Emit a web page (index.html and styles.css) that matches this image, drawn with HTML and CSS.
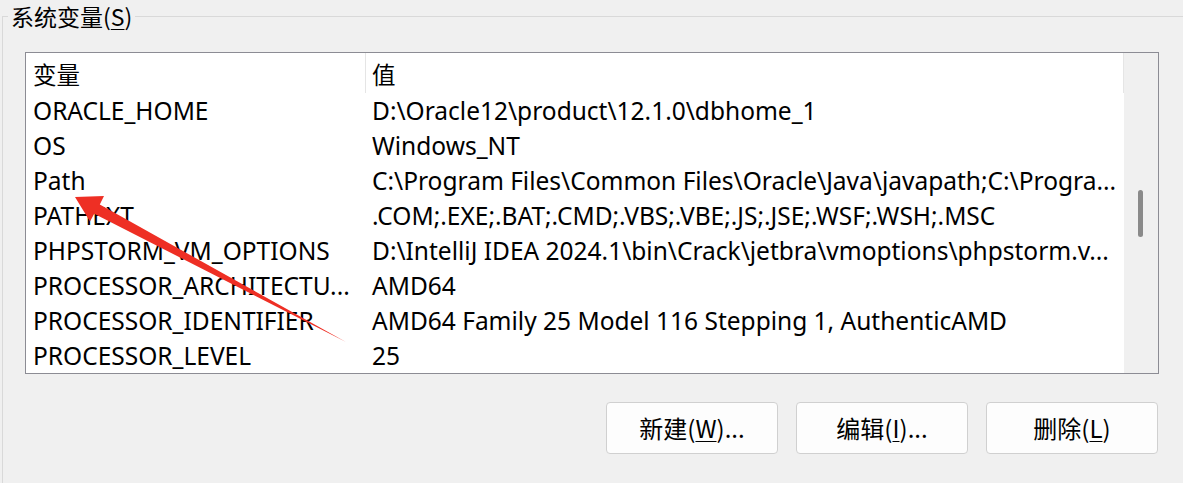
FILE: index.html
```html
<!DOCTYPE html>
<html lang="zh-CN">
<head>
<meta charset="utf-8">
<title>系统变量</title>
<link rel="stylesheet" href="styles.css">
</head>
<body>
<div class="group">
  <div class="group-title">系统变量(<u>S</u>)</div>
  <div class="list">
    <div class="list-main">
      <div class="row header"><div class="c1">变量</div><div class="c2">值</div></div>
      <div class="row"><div class="c1">ORACLE_HOME</div><div class="c2">D:\Oracle12\product\12.1.0\dbhome_1</div></div>
      <div class="row"><div class="c1">OS</div><div class="c2">Windows_NT</div></div>
      <div class="row"><div class="c1">Path</div><div class="c2">C:\Program Files\Common Files\Oracle\Java\javapath;C:\Progra...</div></div>
      <div class="row"><div class="c1">PATHEXT</div><div class="c2">.COM;.EXE;.BAT;.CMD;.VBS;.VBE;.JS;.JSE;.WSF;.WSH;.MSC</div></div>
      <div class="row"><div class="c1">PHPSTORM_VM_OPTIONS</div><div class="c2">D:\IntelliJ IDEA 2024.1\bin\Crack\jetbra\vmoptions\phpstorm.v...</div></div>
      <div class="row"><div class="c1">PROCESSOR_ARCHITECTU...</div><div class="c2">AMD64</div></div>
      <div class="row"><div class="c1">PROCESSOR_IDENTIFIER</div><div class="c2">AMD64 Family 25 Model 116 Stepping 1, AuthenticAMD</div></div>
      <div class="row"><div class="c1">PROCESSOR_LEVEL</div><div class="c2">25</div></div>
    </div>
    <div class="scrollbar"><div class="thumb"></div></div>
  </div>
  <div class="buttons">
    <div class="btn">新建(<u>W</u>)...</div>
    <div class="btn">编辑(<u>I</u>)...</div>
    <div class="btn">删除(<u>L</u>)</div>
  </div>
</div>
<svg class="arrow" width="1183" height="483" viewBox="0 0 1183 483">
  <polygon points="75,197 104,196 99.8,204.6 346,342 94.2,213.8 90,221.5" fill="#ee2f24"/>
</svg>
</body>
</html>
```
FILE: styles.css
```css
html, body {
  margin: 0;
  padding: 0;
  background: #f0f0f0;
  overflow: hidden;
}
body {
  width: 1183px;
  height: 483px;
  font-family: "Noto Sans", "Noto Sans CJK SC", sans-serif;
  font-size: 24.5px;
  color: #000;
  position: relative;
}
.group {
  margin: 16px 0 0 2px;
  box-sizing: border-box;
  width: 1181px;
  height: 480px;
  border-top: 1px solid #d9d9d9;
  border-left: 1px solid #d9d9d9;
}
.group-title {
  display: block;
  width: max-content;
  margin: -16px 0 0 5px;
  padding: 0 3px;
  height: 30px;
  line-height: 30px;
  background: #f0f0f0;
  font-family: "Noto Sans CJK SC", "Noto Sans", sans-serif;
  font-size: 23px;
}
.group-title u, .btn u {
  text-underline-offset: 3px;
  text-decoration-thickness: 1px;
}
.list {
  display: flex;
  margin: 21px 0 0 22px;
  width: 1134px;
  height: 322px;
  box-sizing: border-box;
  border: 1px solid #8c8c94;
  background: #fff;
}
.list-main {
  width: 1098px;
  display: flex;
  flex-direction: column;
}
.row {
  display: flex;
  height: 35px;
  flex: none;
  align-items: center;
  white-space: nowrap;
}
.row .c1 {
  width: 340px;
  box-sizing: border-box;
  padding-left: 7px;
  overflow: hidden;
}
.row .c2 {
  flex: 1;
  box-sizing: border-box;
  padding-left: 6px;
  overflow: hidden;
}
.header {
  height: 40px;
  align-items: stretch;
  font-family: "Noto Sans CJK SC", "Noto Sans", sans-serif;
  font-size: 23.5px;
}
.header .c1, .header .c2 {
  display: flex;
  align-items: center;
  padding-top: 2px;
}
.header .c1 {
  border-right: 1px solid #e5e5e5;
}
.header .c2 {
  border-right: 1px solid #e5e5e5;
  padding-left: 6px;
}
.scrollbar {
  width: 34px;
  background: #f0f0f0;
  display: flex;
  align-items: flex-start;
  padding: 137px 0 0 14px;
  box-sizing: border-box;
}
.thumb {
  width: 5px;
  height: 47px;
  border-radius: 3px;
  background: #8a8a8a;
}
.buttons {
  display: flex;
  justify-content: flex-end;
  gap: 18px;
  margin-top: 28px;
  padding-right: 25px;
}
.btn {
  width: 172px;
  height: 52px;
  box-sizing: border-box;
  border: 1px solid #d0d0d0;
  border-radius: 4px;
  background: #fdfdfd;
  display: flex;
  align-items: center;
  justify-content: center;
  font-family: "Noto Sans CJK SC", "Noto Sans", sans-serif;
  font-size: 24px;
  padding-bottom: 2px;
}
.arrow {
  position: absolute;
  left: 0;
  top: 0;
  pointer-events: none;
}
```
